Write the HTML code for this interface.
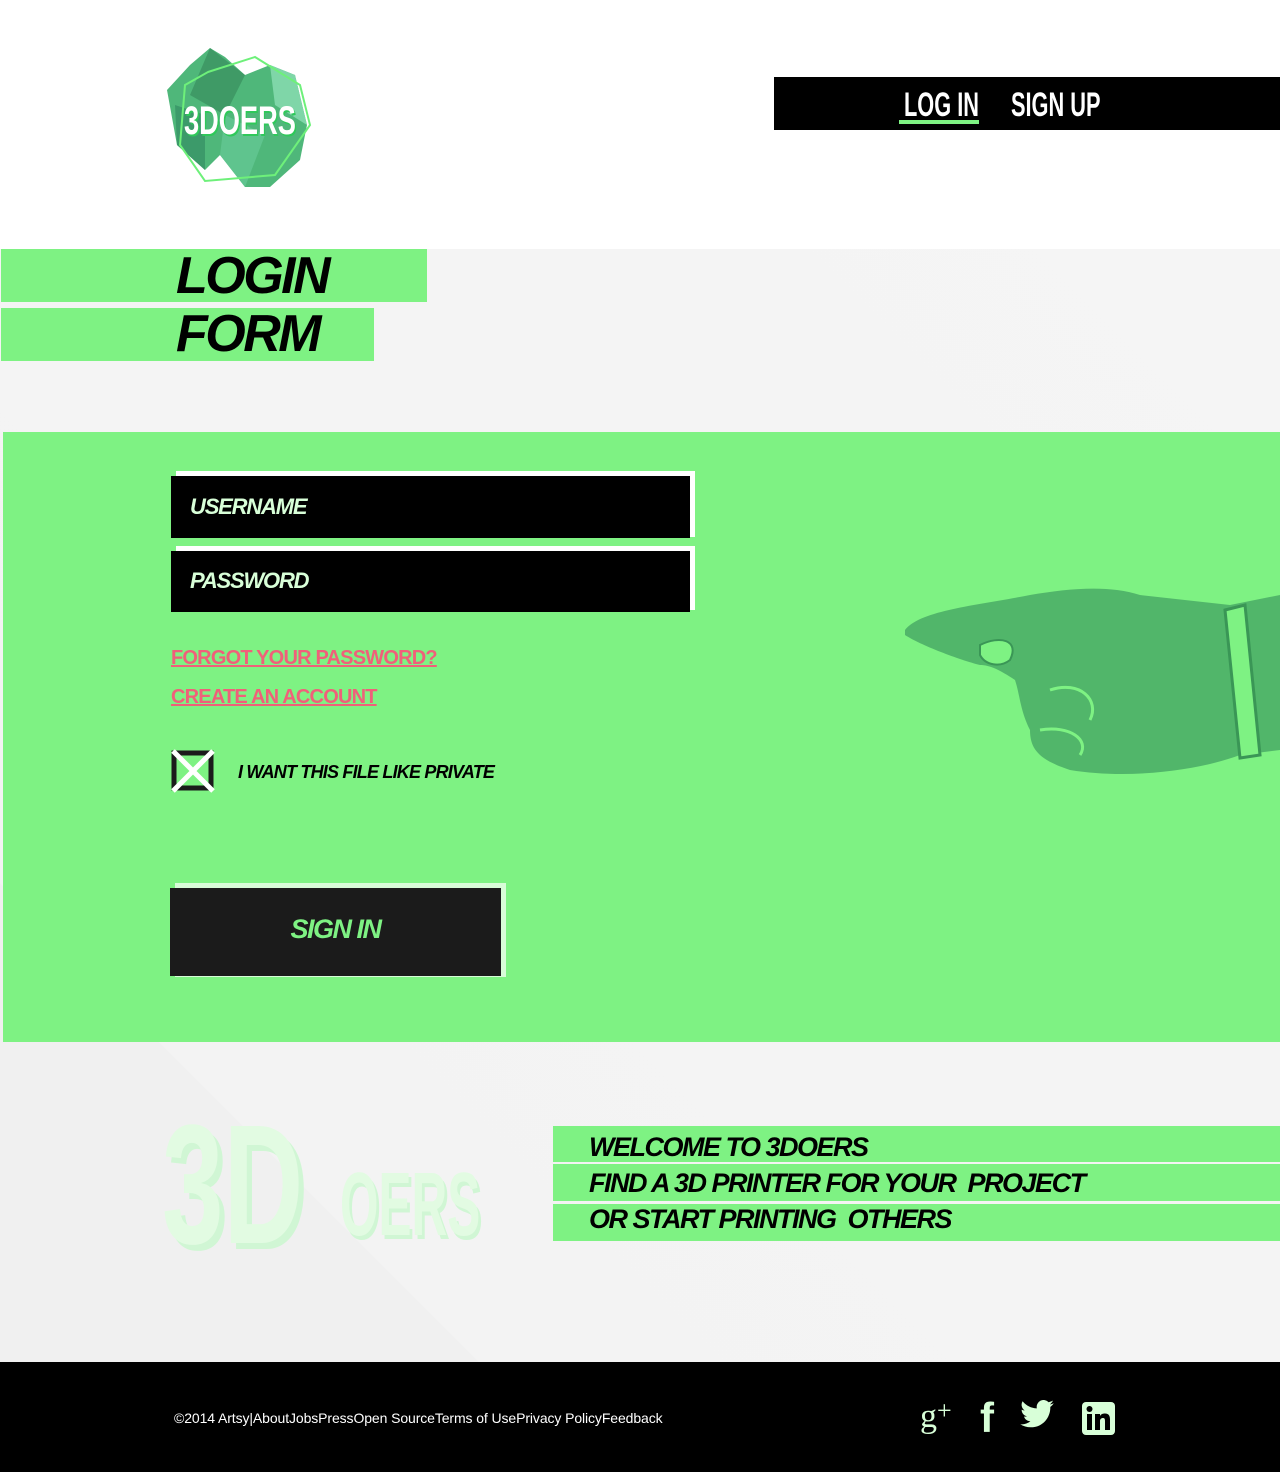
<!DOCTYPE html>
<html><head><meta charset="utf-8"><style>
*{margin:0;padding:0;box-sizing:border-box}
body{width:1280px;height:1472px;position:relative;background:#fff;font-family:"Liberation Sans",sans-serif;overflow:hidden}
.abs{position:absolute}
.g{background:#7ef283}
.nar{font-family:'Liberation Sans Narrow','Liberation Sans',sans-serif;transform-origin:left;white-space:nowrap}
</style></head><body>
<div class="abs" style="left:0;top:249px;width:1280px;height:1113px;background:linear-gradient(45deg,#f0f0f0 0%,#f0f0f0 20%,#f3f3f3 20%,#f5f5f5 100%)"></div>
<!-- logo -->
<svg class="abs" style="left:165px;top:45px" width="150" height="145" viewBox="0 0 150 145">
<polygon points="25,20 45,3 60,12 80,30 105,20 130,30 142,80 135,115 105,142 80,142 55,110 40,125 12,100 2,45" fill="#4fb77a"/>
<polygon points="45,3 80,30 60,70 25,50" fill="#3f9a66"/>
<polygon points="105,20 130,30 142,80 110,60" fill="#7fd6a8"/>
<polygon points="60,70 100,90 80,142 55,110" fill="#5fc48e"/>
<polygon points="10,60 40,70 40,125 12,100" fill="#3c9a6a"/>
<polygon points="43,27 90,12 135,40 145,80 110,130 40,136 15,100 20,40" fill="none" stroke="#6ef07a" stroke-width="2"/>
</svg>
<div class="abs nar" style="left:184px;top:99px;color:#fff;font-weight:bold;font-size:40px;line-height:44px;transform:scaleX(.68);text-shadow:2px 2px 0 #2fc85a">3DOERS</div>
<!-- nav -->
<div class="abs" style="left:774px;top:77px;width:506px;height:53px;background:#000"></div>
<div class="abs nar" style="left:904px;top:86px;color:#fff;font-weight:bold;font-size:34px;line-height:38px;transform:scaleX(.64)">LOG IN</div>
<div class="abs" style="left:899px;top:120px;width:80px;height:4px;background:#7ef283"></div>
<div class="abs nar" style="left:1011px;top:86px;color:#fff;font-weight:bold;font-size:34px;line-height:38px;transform:scaleX(.64)">SIGN UP</div>
<!-- title -->
<div class="abs g" style="left:1px;top:249px;width:426px;height:53px"></div>
<div class="abs g" style="left:1px;top:308px;width:373px;height:53px"></div>
<div class="abs" style="left:176px;top:247px;font:italic bold 52px/58px 'Liberation Sans',sans-serif;color:#000;letter-spacing:-2.5px">LOGIN</div>
<div class="abs" style="left:176px;top:305px;font:italic bold 52px/58px 'Liberation Sans',sans-serif;color:#000;letter-spacing:-2.5px">FORM</div>
<!-- panel -->
<div class="abs g" style="left:3px;top:432px;width:1277px;height:610px"></div>
<div class="abs" style="left:176px;top:471px;width:519px;height:66px;background:#fff"></div>
<div class="abs" style="left:171px;top:476px;width:519px;height:62px;background:#000"></div>
<div class="abs" style="left:190px;top:494px;color:#d8ffd8;font:italic bold 22px 'Liberation Sans',sans-serif;letter-spacing:-1.2px">USERNAME</div>
<div class="abs" style="left:176px;top:546px;width:519px;height:64px;background:#fff"></div>
<div class="abs" style="left:171px;top:551px;width:519px;height:61px;background:#000"></div>
<div class="abs" style="left:190px;top:568px;color:#d8ffd8;font:italic bold 22px 'Liberation Sans',sans-serif;letter-spacing:-1.2px">PASSWORD</div>
<div class="abs" style="left:171px;top:647px;color:#f0607a;font:bold 20px 'Liberation Sans',sans-serif;text-decoration:underline;letter-spacing:-.8px">FORGOT YOUR PASSWORD?</div>
<div class="abs" style="left:171px;top:686px;color:#f0607a;font:bold 20px 'Liberation Sans',sans-serif;text-decoration:underline;letter-spacing:-.8px">CREATE AN ACCOUNT</div>
<svg class="abs" style="left:170px;top:748px" width="46" height="46"><rect x="4" y="5" width="37" height="35" fill="none" stroke="#1b1b1b" stroke-width="5"/><path d="M3 3L43 43M43 3L3 43" stroke="#fff" stroke-width="5"/></svg>
<div class="abs" style="left:238px;top:762px;font:italic bold 18px 'Liberation Sans',sans-serif;color:#000;letter-spacing:-.8px">I WANT THIS FILE LIKE PRIVATE</div>
<div class="abs" style="left:175px;top:883px;width:331px;height:94px;background:#d8fcd8"></div>
<div class="abs" style="left:170px;top:888px;width:331px;height:88px;background:#1b1b1b"></div>
<div class="abs" style="left:170px;top:914px;width:331px;text-align:center;color:#7ef283;font:italic bold 27px 'Liberation Sans',sans-serif;letter-spacing:-1.5px">SIGN IN</div>
<!-- hand -->
<svg class="abs" style="left:900px;top:580px" width="380" height="200" viewBox="0 0 380 200">
<path d="M5 50 C20 30 80 25 130 15 C170 8 210 5 240 15 L330 25 L380 15 L380 170 L340 175 C300 190 230 200 170 190 C140 180 130 170 130 150 C120 130 120 115 115 100 C100 90 90 85 80 85 C60 80 20 65 5 55Z" fill="#4caf67" opacity=".9"/>
<path d="M80 65 C100 55 120 60 110 80 C100 88 85 85 80 75Z" fill="#7ef283" stroke="#3a9656" stroke-width="2"/>
<path d="M325 30 L345 25 L360 175 L340 178Z" fill="#7ef283" stroke="#3a9656" stroke-width="3"/>
<path d="M150 110 C180 100 200 120 190 140 M140 150 C170 145 190 160 180 175" fill="none" stroke="#7ef283" stroke-width="3"/>
</svg>
<!-- bottom -->
<div class="abs nar" style="left:162px;top:1100px;font-weight:bold;font-size:170px;line-height:170px;color:#e2fbe2;transform:scaleX(.65);text-shadow:8px 6px 0 #d0f6d4">3D</div>
<div class="abs nar" style="left:340px;top:1160px;font-weight:bold;font-size:90px;line-height:90px;color:#e2fbe2;transform:scaleX(.55);text-shadow:5px 4px 0 #d0f6d4">OERS</div>
<div class="abs g" style="left:553px;top:1126px;width:727px;height:36px"></div>
<div class="abs g" style="left:553px;top:1164px;width:727px;height:37px"></div>
<div class="abs g" style="left:553px;top:1204px;width:727px;height:37px"></div>
<div class="abs" style="left:589px;top:1129px;font:italic bold 27px/36px 'Liberation Sans',sans-serif;color:#000;letter-spacing:-1.5px">WELCOME TO 3DOERS<br>FIND A 3D PRINTER FOR YOUR &nbsp;PROJECT<br>OR START PRINTING &nbsp;OTHERS</div>
<!-- footer -->
<div class="abs" style="left:0;top:1362px;width:1280px;height:110px;background:#000"></div>
<div class="abs" style="left:174px;top:1410px;color:#fff;font:14px 'Liberation Sans',sans-serif;letter-spacing:-.1px">©2014 Artsy|AboutJobsPressOpen SourceTerms of UsePrivacy PolicyFeedback</div>
<div class="abs" style="left:920px;top:1396px;color:#d8ffd8;font:34px 'Liberation Serif',serif">g<span style="font-size:26px;vertical-align:8px">+</span></div>
<div class="abs" style="left:980px;top:1398px;color:#d8ffd8;font:bold 42px/40px 'Liberation Sans',sans-serif">f</div>
<svg class="abs" style="left:1020px;top:1400px" width="34" height="28" viewBox="0 0 24 20"><path d="M24 2.3c-.9.4-1.8.7-2.8.8 1-.6 1.8-1.6 2.2-2.7-1 .6-2 1-3.1 1.2A4.9 4.9 0 0 0 11.9 6 14 14 0 0 1 1.7.9a4.9 4.9 0 0 0 1.5 6.6c-.8 0-1.6-.3-2.2-.6 0 2.4 1.7 4.4 3.9 4.8-.7.2-1.5.2-2.2.1.6 2 2.4 3.4 4.6 3.4A9.9 9.9 0 0 1 0 17.3 14 14 0 0 0 7.5 19.5c9.1 0 14-7.5 14-14v-.6c1-.7 1.8-1.6 2.5-2.6z" fill="#d8ffd8"/></svg>
<svg class="abs" style="left:1082px;top:1402px" width="33" height="33" viewBox="0 0 33 33"><rect width="33" height="33" rx="4" fill="#d8ffd8"/><rect x="5" y="12" width="5" height="16" fill="#000"/><circle cx="7.5" cy="7" r="3" fill="#000"/><path d="M13 12h5v2c1-2 3-2.5 5-2.5 4 0 5 2.5 5 6V28h-5v-9c0-2-.5-3-2-3s-3 1-3 3v9h-5z" fill="#000"/></svg>
</body></html>
